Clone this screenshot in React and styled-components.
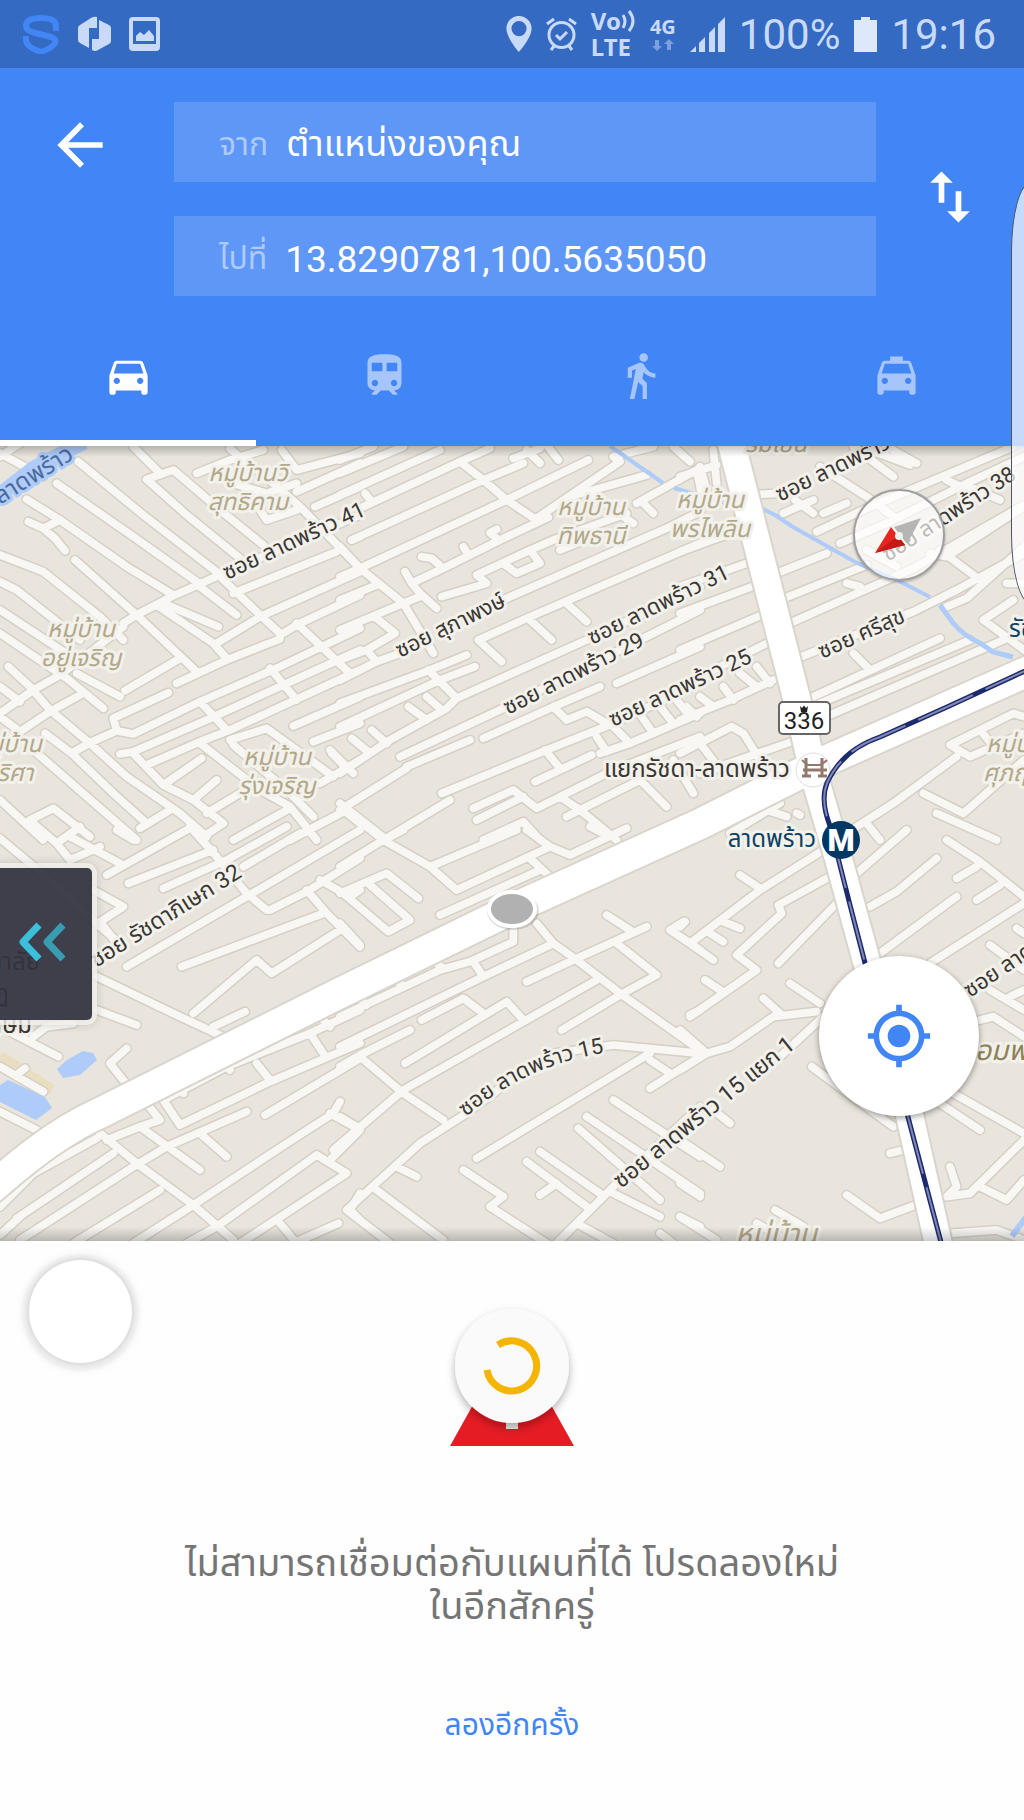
import React from "react";
import styled, { createGlobalStyle, css } from "styled-components";

const GlobalStyle = createGlobalStyle`
  *, *::before, *::after { box-sizing: border-box; }
  body {
    margin: 0;
    background: #fefefe;
    font-family: Roboto, "Noto Sans Thai", "Noto Sans", sans-serif;
  }
  button, input { font: inherit; color: inherit; }
`;

const plainButton = css`
  appearance: none;
  border: 0;
  padding: 0;
  margin: 0;
  background: none;
  cursor: pointer;
  display: flex;
  align-items: center;
  justify-content: center;
`;

const Screen = styled.div`
  position: relative;
  min-height: 100vh;
  overflow: hidden;
  display: flex;
  flex-direction: column;
`;

const StatusBar = styled.div`
  height: 68px;
  padding: 0 28px 0 22px;
  display: flex;
  align-items: center;
  justify-content: space-between;
  background: #346ac2;
  color: #c9daf8;
`;

const StatusGroup = styled.div`
  display: flex;
  align-items: center;
  gap: ${(p) => p.$gap}px;
`;

const StatusText = styled.span`
  padding-top: 2px;
  font-size: 42px;
  line-height: 66px;
`;

const VolteBadge = styled.span`
  display: grid;
  font-family: "Noto Sans", sans-serif;
  font-weight: 700;
  font-size: 24px;
  line-height: 26px;
`;

const VoLine = styled.span`
  display: flex;
  align-items: center;
`;

const DataBadge = styled.span`
  display: grid;
  justify-items: center;
  font-family: "Noto Sans", sans-serif;
  font-weight: 700;
  font-size: 20px;
  line-height: 22px;
`;

const Header = styled.header`
  background: #4285f4;
  color: #fff;
`;

const RouteForm = styled.form`
  display: grid;
  grid-template-columns: 174px 1fr 148px;
  padding-top: 34px;
`;

const IconButton = styled.button`
  ${plainButton}
  height: ${(p) => p.$height}px;
  padding-right: ${(p) => p.$shift}px;
`;

const Fields = styled.div`
  display: grid;
  gap: 34px;
`;

const Field = styled.label`
  height: 80px;
  padding: 6px 16px 0 45px;
  display: flex;
  align-items: center;
  gap: 18px;
  background: #5f97f6;
`;

const FieldName = styled.span`
  color: #adcafa;
  font-size: 32px;
`;

const FieldInput = styled.input`
  flex: 1;
  min-width: 0;
  height: 74px;
  padding: 0;
  border: 0;
  outline: 0;
  background: none;
  color: #fff;
  font-size: ${(p) => (p.$numeric ? 37 : 36)}px;
`;

const Tabs = styled.nav`
  display: grid;
  grid-template-columns: repeat(4, 1fr);
`;

const Tab = styled.button`
  ${plainButton}
  height: 150px;
  padding-top: 14px;
  color: ${(p) => (p.$active ? "#fff" : "#a6c6fb")};
  border-bottom: 6px solid ${(p) => (p.$active ? "#fff" : "transparent")};
`;

const MapArea = styled.section`
  position: relative;
`;

const MapSvg = styled.svg`
  display: block;
  width: 100%;
  height: auto;
`;

const Compass = styled.button`
  ${plainButton}
  position: absolute;
  top: 43px;
  right: 79px;
  width: 92px;
  height: 92px;
  border: 2px solid #a0a0a0;
  border-radius: 50%;
  background: rgba(255, 255, 255, 0.65);
  box-shadow: 0 1px 3px rgba(0, 0, 0, 0.3);
`;

const LocateButton = styled.button`
  ${plainButton}
  position: absolute;
  right: 45px;
  bottom: 125px;
  width: 160px;
  height: 160px;
  border-radius: 50%;
  background: #fff;
  box-shadow: 0 2px 6px rgba(0, 0, 0, 0.4);
`;

const DrawerHandle = styled.button`
  ${plainButton}
  position: absolute;
  left: 0;
  top: 422px;
  width: 92px;
  height: 152px;
  padding: 0 8px 4px 0;
  border-radius: 0 5px 5px 0;
  background: rgba(50, 50, 64, 0.93);
  box-shadow: 0 0 0 5px rgba(244, 242, 238, 0.8), 0 0 10px 5px rgba(0, 0, 0, 0.15);
`;

const EdgePanel = styled.div`
  position: absolute;
  top: 182px;
  right: -27px;
  width: 40px;
  height: 422px;
  border: 1px solid #4a5568;
  border-radius: 20px / 70px;
  background: rgba(255, 255, 255, 0.7);
`;

const Bubble = styled.div`
  position: absolute;
  left: 29px;
  top: 19px;
  width: 103px;
  height: 103px;
  border-radius: 50%;
  background: #fff;
  box-shadow: 0 0 5px rgba(0, 0, 0, 0.14), 0 1px 3px 7px rgba(0, 0, 0, 0.04), 0 1px 8px 8px rgba(0, 0, 0, 0.04);
`;

const Notice = styled.section`
  position: relative;
  flex: 1;
  padding: 59px 180px 40px;
  display: flex;
  flex-direction: column;
  align-items: center;
  background: #fefefe;
`;

const Message = styled.p`
  margin: 92px 0 0;
  color: #757575;
  font-size: 38px;
  line-height: 43px;
  text-align: center;
`;

const Retry = styled.button`
  ${plainButton}
  margin-top: 73px;
  color: #4285f4;
  font-size: 30px;
  line-height: 48px;
`;

const ICONS = {
  back: "M20 11H7.83l5.59-5.59L12 4l-8 8 8 8 1.41-1.41L7.83 13H20v-2z",
  swap: "M16 17.01V10h-2v7.01h-3L15 21l4-3.99h-3zM9 3L5 6.99h3V14h2V6.99h3L9 3z",
  car: "M18.92 6.01C18.72 5.42 18.16 5 17.5 5h-11c-.66 0-1.21.42-1.42 1.01L3 12v8c0 .55.45 1 1 1h1c.55 0 1-.45 1-1v-1h12v1c0 .55.45 1 1 1h1c.55 0 1-.45 1-1v-8l-2.08-5.99zM6.5 16c-.83 0-1.5-.67-1.5-1.5S5.67 13 6.5 13s1.5.67 1.5 1.5S7.33 16 6.5 16zm11 0c-.83 0-1.5-.67-1.5-1.5s.67-1.5 1.5-1.5 1.5.67 1.5 1.5-.67 1.5-1.5 1.5zM5 11l1.5-4.5h11L19 11H5z",
  train: "M12 2c-4 0-8 .5-8 4v9.5C4 17.43 5.57 19 7.5 19L6 20.5v.5h2.23l2-2H14l2 2h2v-.5L16.5 19c1.93 0 3.5-1.57 3.5-3.5V6c0-3.5-3.58-4-8-4zM7.5 17c-.83 0-1.5-.67-1.5-1.5S6.67 14 7.5 14s1.5.67 1.5 1.5S8.33 17 7.5 17zm3.5-7H6V6h5v4zm2 0V6h5v4h-5zm3.5 7c-.83 0-1.5-.67-1.5-1.5s.67-1.5 1.5-1.5 1.5.67 1.5 1.5-.67 1.5-1.5 1.5z",
  walk: "M13.5 5.5c1.1 0 2-.9 2-2s-.9-2-2-2-2 .9-2 2 .9 2 2 2zM9.8 8.9L7 23h2.1l1.8-8 2.1 2v6h2v-7.5l-2.1-2 .6-3C14.8 12 16.8 13 19 13v-2c-1.9 0-3.5-1-4.3-2.4l-1-1.6c-.4-.6-1-1-1.7-1-.3 0-.5.1-.8.1L6 8.3V13h2V9.6l1.8-.7",
  taxi: "M18.92 6.01C18.72 5.42 18.16 5 17.5 5H15V3H9v2H6.5c-.66 0-1.21.42-1.42 1.01L3 12v8c0 .55.45 1 1 1h1c.55 0 1-.45 1-1v-1h12v1c0 .55.45 1 1 1h1c.55 0 1-.45 1-1v-8l-2.08-5.99zM6.5 16c-.83 0-1.5-.67-1.5-1.5S5.67 13 6.5 13s1.5.67 1.5 1.5S7.33 16 6.5 16zm11 0c-.83 0-1.5-.67-1.5-1.5s.67-1.5 1.5-1.5 1.5.67 1.5 1.5-.67 1.5-1.5 1.5zM5 11l1.5-4.5h11L19 11H5z",
  locate: "M12 8c-2.21 0-4 1.79-4 4s1.79 4 4 4 4-1.79 4-4-1.79-4-4-4zm8.94 3c-.46-4.17-3.77-7.48-7.94-7.94V1h-2v2.06C6.83 3.52 3.52 6.83 3.06 11H1v2h2.06c.46 4.17 3.77 7.48 7.94 7.94V23h2v-2.06c4.17-.46 7.48-3.77 7.94-7.94H23v-2h-2.06zM12 19c-3.87 0-7-3.13-7-7s3.13-7 7-7 7 3.13 7 7-3.13 7-7 7z",
  pin: "M12 2C8.13 2 5 5.13 5 9c0 5.25 7 13 7 13s7-7.75 7-13c0-3.87-3.13-7-7-7zm0 11.200a4.200 4.200 0 1 1 0-8.400 4.200 4.200 0 0 1 0 8.400z",
};

const Icon = ({ name, size, color = "currentColor", box = "0 0 24 24" }) => (
  <svg width={size} height={size} viewBox={box} fill={color} aria-hidden="true">
    <path d={ICONS[name]} />
  </svg>
);

/* Street geometry, one sheet per map tile; three sheet units make one map unit. */
const TILES = [
  {
    x: 0,
    y: 440,
    d: `M370 550L410 525 520 467 600 432 670 400 1080 225M235 65L430 225 655 400M170 130L400 290 600 432M80 178L180 240 380 380 520 465
    M85 245L130 265 165 295 195 332M130 265L180 240M225 360L410 525 590 695M470 495L640 610 680 655M490 490L655 560M600 440L710 525
    M650 400L780 525 840 580 840 597 680 660 530 730M440 118L520 90 660 210 790 315M440 118L560 225 720 355M400 20L475 95
    M0 40L130 110M0 50L60 10M0 345L130 395 300 530 370 600M0 425L50 450 240 600M0 510L190 635M0 580L200 715 310 805M230 700L360 770
    M0 820L100 750 180 705 260 645 370 560M25 680L90 740 150 810 270 910 380 1010 540 1120 620 1190M0 740L60 785M0 830L60 875 150 815 240 765
    M135 880L215 940 340 1060 440 1150M215 940L270 908 350 872 400 882 600 785 840 680 1080 565M350 870L340 835 505 758
    M360 942L400 935 620 840 850 735 1080 630M440 975L600 905 690 870 1080 690M600 785L680 870M810 685L890 780M890 550L1050 700
    M375 752L540 655M650 610L780 530 1080 395M850 580L890 555 1080 465M700 460L1010 335M750 70L900 200 1080 385M740 150L800 240 890 210
    M590 100L690 60 790 30M690 25L760 90M700 130L800 160 890 130M845 30L890 90 1080 40M890 155L1080 70M945 200L1080 140M1055 300L1080 290
    M880 858L1080 770M940 905L1080 850M690 900L800 865 1000 1010M700 915L860 1050 940 1130M600 910L780 1050 870 1100 950 1200
    M400 940L490 1035 580 1080 670 1150 610 1190M490 1035L605 955M580 1080L650 1020M620 1120L720 1060M420 1165L510 1110
    M100 930L410 1200M0 1080L130 1200M90 1140L160 1105 270 1190M990 930L1060 1000M960 1030L1080 960M1030 1110L1080 1150M700 1200L870 1105M870 1200L1040 1110`,
  },
  {
    x: 340,
    y: 440,
    d: `M0 60L100 20M0 100L190 20M0 165L300 30M60 205L360 65 450 25M75 160L95 185M35 300L430 120 550 70M60 385L500 180 745 60M0 410L60 385
    M360 65L430 120 500 180 590 240M0 320L60 385 190 490 280 640M195 395L215 430 240 460 290 505M215 430L310 385 480 300 625 232
    M245 350L275 355 310 385M370 320L385 345M470 268L450 278 475 300M0 480L110 435M0 570L190 490 240 470M110 535L165 580 80 630 0 660
    M0 720L110 665 180 640M80 630L110 665M305 470L440 430 410 405 560 335 640 300 860 220M490 370L530 400 600 370 570 330
    M500 475L980 265 1080 215M415 600L560 535 1080 310M415 600L485 665M570 540L635 600M680 490L740 545M350 775L740 600 1080 440
    M0 790L270 690 380 645M0 860L300 720 405 680M265 690L350 775 320 805 150 900 0 1000M260 770L300 805M205 800L260 840M95 870L140 910
    M35 895L90 940M-25 940L20 985M180 950L500 800 1080 510M200 980L390 900M0 1110L200 985M430 895L630 805 780 740
    M640 800L680 840 740 815 800 850M830 730L1080 620M305 1060L620 930 820 850 1080 730M615 930L660 985M585 1025L755 945
    M770 890L800 935M780 940L870 910 1080 820M820 860L870 910M905 830L940 880M960 800L1000 850M1010 780L1050 830
    M0 1090L140 1200M140 1195L330 1080M400 1105L520 1050 590 1105 800 1000 900 960 1080 890M410 1140L550 1070M430 1200L550 1145 600 1200
    M660 1070L720 1110 830 1200M680 1130L900 1020 980 1100M520 55L600 25M560 30L600 70M620 15L655 60M820 50L940 20M590 235L840 65 820 50M690 170L920 105
    M890 190L1070 90M910 190L940 220M1000 20L1050 65M750 160L880 250M660 330L760 290M1070 90L1090 190M1000 960L1060 1060`,
  },
  {
    x: 680,
    y: 440,
    d: `M0 110L110 75M60 80L80 150M100 30L110 130M210 165L290 160M310 220L400 180M345 180L400 220M430 220L500 190M410 275L560 205 1000 20
    M480 310L620 250 860 130 1032 50M420 80L560 170 640 230M520 20L640 110M570 30L690 75M620 20L710 70M0 335L180 270M0 440L200 370
    M0 520L230 435M0 630L245 525M0 740L260 610M290 400L440 340M300 480L560 375M340 545L700 385 900 270 1032 195M365 650L700 515 830 450 1032 340
    M500 430L540 440M780 330L900 420M800 500L860 475 1032 320M750 340L800 350 1032 200M1000 480L910 540 1032 630M400 770L780 595M520 640L570 690M420 790L870 600
    M450 825L970 600M1032 430L980 430M560 330L650 380M870 140L960 180M800 120L860 150M20 800L50 830M60 770L100 800M130 740L160 780M180 700L230 740M230 680L270 730
    M0 840L150 780 280 720M0 940L155 860 190 880 240 960M60 1000L350 900M60 910L130 1000M150 1180L300 1090M260 1110L320 1130M350 1120L360 1125
    M1032 830L1000 820 810 915 870 950 1032 880M830 950L640 1090 500 1180M900 870L950 930M1032 960L850 1120 730 1060M770 1120L950 1200M560 1150L600 1200`,
  },
  {
    x: 0,
    y: 830,
    d: `M0 25L150 150 300 290 360 340M100 -20L170 40 240 -10M170 40L210 90 300 50M210 20L360 100M350 0L400 30M320 135L560 0M385 160L640 60
    M490 175L680 90 860 -10M570 -10L650 80 740 190 800 240M380 410L740 200 1080 0M730 110L900 10M810 240L920 185 1080 85M545 410L970 250
    M580 550L770 390 815 430 1020 300M920 180L980 250 1080 350M960 150L1050 200 1080 180M290 440L540 560 670 620M290 540L410 585
    M280 180L370 230 300 275 350 340M640 590L735 545M380 655L330 700 385 770M0 590L175 680M100 620L140 590 220 580M0 710L130 785M50 735L75 715
    M0 845L110 900M490 810L680 710 930 610 1080 540M540 885L810 755 1080 640M770 700L810 750M930 610L970 670M660 690L690 720M535 760L550 790
    M960 560L990 590M440 820L480 870 420 890 320 930M490 810L540 885M795 855L1080 685M740 845L500 950 400 1010 60 1230M420 890L600 1020
    M600 910L680 980M300 910L410 1000 580 1125 700 1230M50 1165L340 970M0 1130L100 1030 290 925M220 1240L480 1080M400 1240L580 1125 860 940 1000 850 1020 815
    M560 1240L650 1190 950 975 1040 1030 720 1240M990 990L1080 900M990 850L1080 900M880 1240L1015 1180M840 1180L890 1240M1080 1090L1050 1140 1080 1170M0 1215L60 1160`,
  },
  {
    x: 340,
    y: 830,
    d: `M0 110L130 30 190 0M130 30L270 110 350 180 630 50 560 0M80 -10L130 30M270 110L530 0M570 85L640 150M630 50L690 75 860 -5M750 -10L800 15
    M300 255L600 120M0 190L140 130 235 205M10 190L145 305 210 270 90 165M0 280L60 345M0 560L300 420 390 395 520 335 520 300M0 650L430 440 630 345
    M400 395L430 440M590 280L640 340 710 390 840 490 1080 660M560 455L700 390 920 290M800 255L870 300M830 340L950 435 840 495 665 600
    M245 570L370 505 430 550M195 700L500 515 550 570M0 710L60 675 210 600M60 680L190 790 310 870M-20 960L190 780 770 450M0 860L50 890
    M20 1140L240 940 380 850 500 760 640 670 820 645 1080 670M20 1140L150 1240M170 1010L230 1040M110 1080L310 1230M410 985L930 670
    M930 690L990 730M930 775L1080 680M820 810L1080 980M740 860L1080 1090M715 895L960 1110M820 1090L960 1160M600 965L780 1090M560 995L740 1130
    M600 1095L650 1060M650 1240L820 1070 1080 830M370 1020L490 1100 450 1130 620 1240M710 1180L820 1240M1020 1160L1080 1190M960 1210L1000 1240
    M1030 275L990 300 1080 360M1050 555L1080 540M290 400L310 415M170 450L190 470M60 505L80 525`,
  },
  {
    x: 680,
    y: 830,
    d: `M180 135L240 175M30 340L240 180 430 60M30 340L100 390M0 320L30 340M130 275L180 295M90 310L130 335M0 290L15 275
    M450 140L295 225 305 250 170 375 230 420 30 560M75 450L120 480M470 220L295 400M570 230L650 185 770 85M530 130L680 0M600 370L830 200M750 400L1032 220
    M800 30L900 95 1032 200M830 145L890 110M890 210L960 165M330 460L420 520M250 505L300 550M0 600L80 670 150 650 280 560 410 545M0 720L80 670
    M300 680L430 560M395 710L640 890M930 345L1032 420M930 480L1032 540M990 500L1032 480M900 570L940 560 1032 620M820 790L1032 910
    M780 820L900 900M0 930L120 1010M100 840L150 880M0 1060L60 1100M0 1160L110 1230M630 970L670 960M500 1095L600 1165 720 1120M285 1140L370 1190
    M810 1010L830 1070 800 1100 870 1090 1032 930M900 1070L980 1110 1032 1050M810 1210L950 1200 1032 1230M1010 295L1032 310M230 1180L300 1220`,
  },
];

const RATCHADA = "M728 430 L797 700 L814 775 L838 857 L867 963 L910 1117 L942 1260";
const LATPHRAO = "M-20 1198 L0 1181 Q55 1133 100 1113 L340 993 L512 909 L700 824 L823 762 L1040 666";
const METRO = "M1040 664 L947 707 L880 737 Q842 750 827 783 Q820 800 830 826 L850 905 L865 963 L908 1117 L942 1246";

const SOI = "#3b3733";
const VILLAGE = "#b2a88a";

const STREET_LABELS = [
  { t: "ซอย ลาดพร้าว 41", x: 227, y: 580, r: -25 },
  { t: "ซอย สุภาพงษ์", x: 400, y: 658, r: -26 },
  { t: "ซอย ลาดพร้าว 31", x: 592, y: 645, r: -26 },
  { t: "ซอย ลาดพร้าว 29", x: 508, y: 715, r: -27 },
  { t: "ซอย ลาดพร้าว 25", x: 613, y: 727, r: -25 },
  { t: "ซอย ลาดพร้าว", x: 780, y: 502, r: -26 },
  { t: "ซอย ลาดพร้าว 38", x: 888, y: 562, r: -33 },
  { t: "ซอย ศรีสุข", x: 822, y: 659, r: -24 },
  { t: "ซอย รัชดาภิเษก 32", x: 96, y: 968, r: -32, size: 23 },
  { t: "ซอย ลาดพร้าว 15 แยก 1", x: 621, y: 1189, r: -39, size: 23 },
  { t: "ซอย ลาดพร้าว", x: 970, y: 998, r: -34 },
  { t: "แยกรัชดา-ลาดพร้าว", x: 604, y: 777, r: 0, size: 24 },
];

const VILLAGE_LABELS = [
  { lines: ["หมู่บ้านวิ", "สุทธิคาม"], x: 248, y: 481 },
  { lines: ["หมู่บ้าน", "อยู่เจริญ"], x: 81, y: 637 },
  { lines: ["หมู่บ้าน", "นริศา"], x: 8, y: 752 },
  { lines: ["หมู่บ้าน", "รุ่งเจริญ"], x: 277, y: 765 },
  { lines: ["หมู่บ้าน", "ทิพธานี"], x: 591, y: 515 },
  { lines: ["หมู่บ้าน", "พรไพลิน"], x: 710, y: 508 },
  { lines: ["ร่มเย็น"], x: 776, y: 452 },
  { lines: ["หมู่บ้าน", "ศุภฤกษ์"], x: 1020, y: 752 },
  { lines: ["หมู่บ้าน"], x: 776, y: 1244, size: 29 },
];

const MapLabel = styled.text`
  font-size: ${(p) => p.$size || 22}px;
  font-style: ${(p) => (p.$italic ? "italic" : "normal")};
  fill: ${(p) => p.$color};
  stroke: ${(p) => p.$halo || "#f3f1ec"};
  stroke-width: 6px;
  stroke-linejoin: round;
  paint-order: stroke;
`;

const Streets = ({ color, width }) =>
  TILES.map((tile) => (
    <path
      key={`${tile.x}-${tile.y}`}
      d={tile.d}
      transform={`translate(${tile.x} ${tile.y}) scale(${1 / 3})`}
      fill="none"
      stroke={color}
      strokeWidth={width}
      strokeLinecap="round"
      strokeLinejoin="round"
    />
  ));

const StreetMap = () => (
  <MapSvg viewBox="0 446 1024 795" role="img" aria-label="แผนที่ ลาดพร้าว">
    <defs>
      <linearGradient id="shade-top" x1="0" y1="0" x2="0" y2="1">
        <stop offset="0" stopColor="#000" stopOpacity=".22" />
        <stop offset="1" stopColor="#000" stopOpacity="0" />
      </linearGradient>
      <linearGradient id="shade-bottom" x1="0" y1="0" x2="0" y2="1">
        <stop offset="0" stopColor="#000" stopOpacity="0" />
        <stop offset="1" stopColor="#000" stopOpacity=".2" />
      </linearGradient>
      <path id="soi-15" d="M466 1117 Q530 1060 625 1050" />
    </defs>
    <rect x="0" y="446" width="1024" height="795" fill="#e9e5dd" />
    <path d="M0 1056L52 1090" stroke="#e9dfc0" strokeWidth="11" />
    <Streets color="#d5d0c6" width={32} />
    <Streets color="#f8f7f3" width={23} />

    <g fill="none" stroke="#aecbfa">
      <path d="M-10 502L34 468 84 442" strokeWidth="15" />
      <path d="M610 446L630 460 663 483M674 488L725 503" strokeWidth="4" />
      <path d="M759 507L775 515 793 527 857 563 897 580 930 597" strokeWidth="4" />
      <path d="M940 605L953 623Q964 636 980 643L993 652 1013 657" strokeWidth="5" />
      <path d="M1030 1212L1012 1236" strokeWidth="6" />
    </g>
    <g fill="#aecbfa">
      <path d="M57 1069L67 1060 83 1051 93 1053 97 1060 80 1075 63 1078z" />
      <path d="M0 1085L8 1080 45 1097 52 1108 36 1120 0 1102z" />
    </g>

    <g fill="none" strokeLinejoin="round">
      <path d={RATCHADA} stroke="#d9d5cc" strokeWidth="31" />
      <path d={LATPHRAO} stroke="#d9d5cc" strokeWidth="34" />
      <path d={RATCHADA} stroke="#fff" strokeWidth="27" />
      <path d={LATPHRAO} stroke="#fff" strokeWidth="30" />
      <circle cx="813" cy="770" r="17" fill="#fff" stroke="#dedede" />
      <path d={METRO} stroke="#1c2a6e" strokeWidth="5" />
      <path d={METRO} stroke="#8288b3" strokeWidth="2" strokeDasharray="60 14" />
    </g>

    {VILLAGE_LABELS.map((label) =>
      label.lines.map((line, i) => (
        <MapLabel key={`${label.x}-${label.y}-${i}`} x={label.x} y={label.y + i * 29} textAnchor="middle" $italic $size={label.size || 24} $color={VILLAGE}>
          {line}
        </MapLabel>
      ))
    )}
    {STREET_LABELS.map((label) => (
      <MapLabel key={`${label.x}-${label.y}`} transform={`translate(${label.x} ${label.y}) rotate(${label.r})`} $size={label.size} $color={SOI}>
        {label.t}
      </MapLabel>
    ))}
    <MapLabel $color={SOI}>
      <textPath href="#soi-15">ซอย ลาดพร้าว 15</textPath>
    </MapLabel>
    <MapLabel transform="translate(75 458) rotate(-32)" textAnchor="end" $size={24} $color="#4c6a9c" $halo="#aecbfa">คลองลาดพร้าว</MapLabel>
    <MapLabel x="816" y="847" textAnchor="end" $size={24} $color="#0c4262">ลาดพร้าว</MapLabel>
    <MapLabel x="1009" y="637" $size={24} $color="#0c4262">รัชดา</MapLabel>
    <MapLabel x="960" y="1060" $italic $size={28} $color="#8f8258">จอมพล</MapLabel>
    <MapLabel x="40" y="970" textAnchor="end" $size={24} $color={SOI}>วิทยาลัย</MapLabel>
    <MapLabel x="9" y="1002" textAnchor="end" $size={24} $color={SOI}>ราชภัฏ</MapLabel>
    <MapLabel x="32" y="1033" textAnchor="end" $size={24} $color={SOI}>จันทรเกษม</MapLabel>

    <rect x="779" y="702" width="51" height="32" rx="4" fill="#fff" stroke="#666" strokeWidth="2" />
    <text x="804" y="729" textAnchor="middle" fontSize="24" fill="#222">336</text>
    <path d="M800 706l2 2 2-2.500 2 2.500 2-2-1 6h-6z" fill="#222" />
    <g fill="none" stroke="#94786c" strokeWidth="3">
      <path d="M802 776h9M818 776h9M806 758v18M822 758v18M803 770h24" />
      <path d="M802 760q4 4 6 5h12q4 -2 7 -5" strokeWidth="2" />
    </g>
    <circle cx="841" cy="840" r="19" fill="#003865" />
    <text x="841" y="851" textAnchor="middle" fontSize="31" fontWeight="900" fill="#fff">M</text>

    <ellipse cx="513" cy="911" rx="26" ry="19" fill="#000" opacity=".14" />
    <ellipse cx="512" cy="909" rx="23" ry="17" fill="#b1b1b1" stroke="#fff" strokeWidth="4" />
    <rect x="0" y="446" width="1024" height="11" fill="url(#shade-top)" />
    <rect x="0" y="1227" width="1024" height="14" fill="url(#shade-bottom)" />
  </MapSvg>
);

const StatusIcons = () => (
  <StatusGroup $gap={18}>
    <svg width="38" height="40" viewBox="0 0 38 40" fill="none" stroke="#4285f4" strokeWidth="6" aria-hidden="true">
      <path d="M34 17v-5q0-8-15-8T4 12q0 4 6 6l19 5q6 2 4 6-3 5-14 9Q4 33 4 26v-4" />
    </svg>
    <svg width="33" height="36" viewBox="0 0 33 36" fill="currentColor" aria-hidden="true">
      <path d="M19 1v11h-8v20L2 27Q0 26 0 24V12q0-2 2-3L13 2q3-2 6-1z" />
      <path d="M21 4l10 5q2 1 2 3v13q0 2-2 3l-11 6q-3 2-6 0V23h7z" />
    </svg>
    <svg width="31" height="34" viewBox="0 0 31 34" aria-hidden="true">
      <rect x="2" y="2" width="27" height="30" rx="2" fill="none" stroke="currentColor" strokeWidth="4" />
      <path d="M1 27h29v6H1zM7 24v-5l4-4 4 3 5-5 5 6v5z" fill="currentColor" />
    </svg>
  </StatusGroup>
);

const StatusInfo = () => (
  <StatusGroup $gap={14}>
    <svg width="26" height="36" viewBox="5 2 14 20" fill="currentColor" aria-hidden="true">
      <path d={ICONS.pin} />
    </svg>
    <svg width="31" height="34" viewBox="0 0 31 34" fill="none" stroke="currentColor" strokeWidth="3" aria-hidden="true">
      <circle cx="15.500" cy="18" r="12.500" />
      <path d="M10 18l4 4 7-7M1 7l7-5M30 7l-7-5M8 29l-3 4M23 29l3 4" />
    </svg>
    <VolteBadge>
      <VoLine>
        Vo
        <svg width="15" height="24" viewBox="0 0 15 24" fill="none" stroke="currentColor" strokeWidth="3" aria-hidden="true">
          <path d="M2 6q4 6 0 13M8 2q8 10 0 20" />
        </svg>
      </VoLine>
      <span>LTE</span>
    </VolteBadge>
    <StatusGroup $gap={14}>
      <DataBadge>
        4G
        <svg width="22" height="14" viewBox="0 0 22 14" fill="#7d9fdc" aria-hidden="true">
          <path d="M3 2h4v6h3l-5 5-5-5h3zM15 12h4V6h3l-5-5-5 5h3z" />
        </svg>
      </DataBadge>
      <svg width="35" height="35" viewBox="0 0 35 35" fill="currentColor" aria-hidden="true">
        <path d="M0 35l6-6v6zM9 35V26l6-6v15zM19 35V16l6-6v25zM28 35V7l7-7v35z" />
      </svg>
    </StatusGroup>
    <StatusText>100%</StatusText>
    <svg width="23" height="35" viewBox="0 0 23 35" fill="#dde8fa" aria-hidden="true">
      <path d="M7 0h9v3h7v32H0V3h7z" />
    </svg>
    <StatusText>19:16</StatusText>
  </StatusGroup>
);

const MODES = [
  { name: "car", label: "รถยนต์", active: true },
  { name: "train", label: "รถไฟ" },
  { name: "walk", label: "เดิน" },
  { name: "taxi", label: "แท็กซี่" },
];

export default function App() {
  return (
    <>
      <GlobalStyle />
      <Screen>
        <StatusBar>
          <StatusIcons />
          <StatusInfo />
        </StatusBar>

        <Header>
          <RouteForm onSubmit={(e) => e.preventDefault()}>
            <IconButton type="button" aria-label="กลับ" $height={86} $shift={14}>
              <Icon name="back" size={68} />
            </IconButton>
            <Fields>
              <Field>
                <FieldName>จาก</FieldName>
                <FieldInput type="text" defaultValue="ตำแหน่งของคุณ" />
              </Field>
              <Field>
                <FieldName>ไปที่</FieldName>
                <FieldInput type="text" defaultValue="13.8290781,100.5635050" $numeric />
              </Field>
            </Fields>
            <IconButton type="button" aria-label="สลับ" $height={190} $shift={0}>
              <Icon name="swap" size={68} />
            </IconButton>
          </RouteForm>
          <Tabs>
            {MODES.map((mode) => (
              <Tab key={mode.name} type="button" aria-label={mode.label} $active={mode.active}>
                <Icon name={mode.name} size={51} />
              </Tab>
            ))}
          </Tabs>
        </Header>

        <MapArea>
          <StreetMap />
          <Compass type="button" aria-label="เข็มทิศ">
            <svg width="50" height="40" viewBox="0 0 50 40" aria-hidden="true">
              <path d="M47 3L20 12 33 29z" fill="#b5b5b5" />
              <path d="M1 38L17 12 31 30z" fill="#e5251f" />
              <path d="M1 38L24 21 31 30z" fill="#c51a17" />
              <circle cx="25" cy="21" r="4" fill="#f4f2ef" />
            </svg>
          </Compass>
          <LocateButton type="button" aria-label="ตำแหน่งของฉัน">
            <Icon name="locate" size={68} color="#4285f4" />
          </LocateButton>
          <DrawerHandle type="button" aria-label="เปิดแถบ">
            <svg width="48" height="40" viewBox="0 0 48 40" fill="none" strokeWidth="7" strokeLinejoin="round" aria-hidden="true">
              <path d="M21 3L5 20l16 17" stroke="#3cbfdb" />
              <path d="M45 3L29 20l16 17" stroke="#3a9cb0" />
            </svg>
          </DrawerHandle>
        </MapArea>

        <Notice>
          <Bubble />
          <svg width="140" height="150" viewBox="442 1300 140 150" aria-hidden="true">
            <defs>
              <filter id="disc-shadow" x="-30%" y="-30%" width="160%" height="160%">
                <feDropShadow dx="0" dy="4" stdDeviation="4" floodOpacity=".3" />
              </filter>
            </defs>
            <path d="M512 1335L574 1446H450z" fill="#e51c23" />
            <path d="M506 1416h12v13h-12z" fill="#e8e8e8" />
            <circle cx="512" cy="1366" r="57" fill="#fafafa" filter="url(#disc-shadow)" />
            <path d="M498 1345A25 25 0 1 1 487 1370" fill="none" stroke="#f5b400" strokeWidth="7" />
          </svg>
          <Message>ไม่สามารถเชื่อมต่อกับแผนที่ได้ โปรดลองใหม่ในอีกสักครู่</Message>
          <Retry type="button">ลองอีกครั้ง</Retry>
        </Notice>

        <EdgePanel />
      </Screen>
    </>
  );
}
